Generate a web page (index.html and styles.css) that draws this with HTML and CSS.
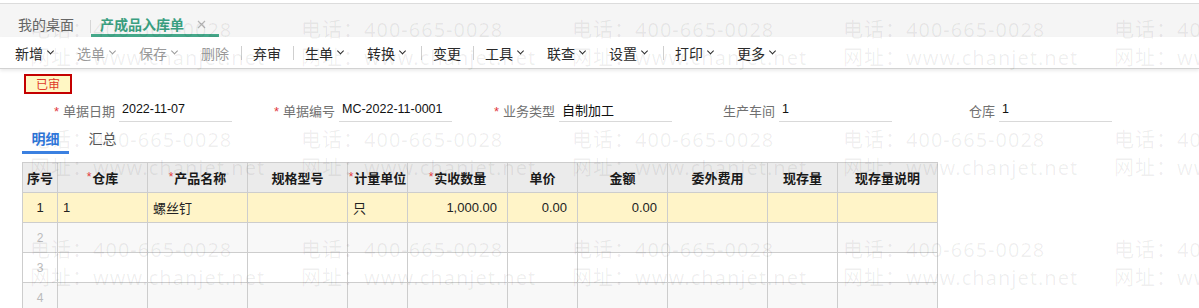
FILE: index.html
```html
<!DOCTYPE html>
<html lang="zh-CN">
<head>
  <meta charset="UTF-8" />
  <title>产成品入库单</title>
  <link rel="stylesheet" href="styles.css">
</head>
<body>
  <div class="page">
    <div class="tabbar">
      <div class="tab first">我的桌面</div>
      <span class="tab-sep"></span>
      <div class="tab active">产成品入库单
        <svg class="close" width="9" height="9" viewBox="0 0 9 9"><path d="M1 1L8 8M8 1L1 8" stroke="#b5b5b5" stroke-width="1.2" fill="none"/></svg>
      </div>
    </div>

    <div class="toolbar">
      <span class="tb drop">新增</span>
      <span class="tb drop off">选单</span>
      <span class="tb drop off">保存</span>
      <span class="tb off">删除</span>
      <span class="tb-sep"></span>
      <span class="tb">弃审</span>
      <span class="tb-sep"></span>
      <span class="tb drop">生单</span>
      <span class="tb drop">转换</span>
      <span class="tb-sep"></span>
      <span class="tb">变更</span>
      <span class="tb-sep"></span>
      <span class="tb drop">工具</span>
      <span class="tb drop">联查</span>
      <span class="tb drop">设置</span>
      <span class="tb-sep"></span>
      <span class="tb drop">打印</span>
      <span class="tb drop">更多</span>
    </div>

    <div class="content">
      <div class="status">已审</div>

      <div class="form-row">
        <div class="field"><label><i>*</i>单据日期</label><div class="value">2022-11-07</div></div>
        <div class="field"><label><i>*</i>单据编号</label><div class="value">MC-2022-11-0001</div></div>
        <div class="field"><label><i>*</i>业务类型</label><div class="value cn">自制加工</div></div>
        <div class="field"><label>生产车间</label><div class="value">1</div></div>
        <div class="field"><label>仓库</label><div class="value">1</div></div>
      </div>

      <div class="subtabs">
        <span class="subtab active">明细</span>
        <span class="subtab">汇总</span>
      </div>

      <table class="grid">
        <colgroup>
          <col style="width:35px"><col style="width:90px"><col style="width:100px"><col style="width:100px">
          <col style="width:60px"><col style="width:100px"><col style="width:70px"><col style="width:90px">
          <col style="width:100px"><col style="width:70px"><col style="width:100px">
        </colgroup>
        <tr>
          <th>序号</th>
          <th><i>*</i>仓库</th>
          <th><i>*</i>产品名称</th>
          <th>规格型号</th>
          <th><i>*</i>计量单位</th>
          <th><i>*</i>实收数量</th>
          <th>单价</th>
          <th>金额</th>
          <th>委外费用</th>
          <th>现存量</th>
          <th>现存量说明</th>
        </tr>
        <tr class="current">
          <td class="seq">1</td>
          <td>1</td>
          <td class="cn">螺丝钉</td>
          <td></td>
          <td class="cn">只</td>
          <td class="num">1,000.00</td>
          <td class="num">0.00</td>
          <td class="num">0.00</td>
          <td></td>
          <td></td>
          <td></td>
        </tr>
        <tr class="stripe">
          <td class="seq empty">2</td><td></td><td></td><td></td><td></td><td></td><td></td><td></td><td></td><td></td><td></td>
        </tr>
        <tr>
          <td class="seq empty">3</td><td></td><td></td><td></td><td></td><td></td><td></td><td></td><td></td><td></td><td></td>
        </tr>
        <tr class="stripe">
          <td class="seq empty">4</td><td></td><td></td><td></td><td></td><td></td><td></td><td></td><td></td><td></td><td></td>
        </tr>
        <tr>
          <td class="seq empty">5</td><td></td><td></td><td></td><td></td><td></td><td></td><td></td><td></td><td></td><td></td>
        </tr>
      </table>
    </div>

    <!-- Wasserzeichen über der Seite -->
    <div class="watermark">
      <div class="wm"><div>电话：400-665-0028</div><div>网址：www.chanjet.net</div></div>
      <div class="wm"><div>电话：400-665-0028</div><div>网址：www.chanjet.net</div></div>
      <div class="wm"><div>电话：400-665-0028</div><div>网址：www.chanjet.net</div></div>
      <div class="wm"><div>电话：400-665-0028</div><div>网址：www.chanjet.net</div></div>
      <div class="wm"><div>电话：400-665-0028</div><div>网址：www.chanjet.net</div></div>
      <div class="wm"><div>电话：400-665-0028</div><div>网址：www.chanjet.net</div></div>
      <div class="wm"><div>电话：400-665-0028</div><div>网址：www.chanjet.net</div></div>
      <div class="wm"><div>电话：400-665-0028</div><div>网址：www.chanjet.net</div></div>
      <div class="wm"><div>电话：400-665-0028</div><div>网址：www.chanjet.net</div></div>
      <div class="wm"><div>电话：400-665-0028</div><div>网址：www.chanjet.net</div></div>
      <div class="wm"><div>电话：400-665-0028</div><div>网址：www.chanjet.net</div></div>
      <div class="wm"><div>电话：400-665-0028</div><div>网址：www.chanjet.net</div></div>
      <div class="wm"><div>电话：400-665-0028</div><div>网址：www.chanjet.net</div></div>
      <div class="wm"><div>电话：400-665-0028</div><div>网址：www.chanjet.net</div></div>
      <div class="wm"><div>电话：400-665-0028</div><div>网址：www.chanjet.net</div></div>
    </div>
  </div>
</body>
</html>
```

FILE: styles.css
```css
body {
  margin: 0;
  font-family: "Liberation Sans", "Noto Sans CJK SC", sans-serif;
  font-size: 13px;
  color: #333;
  background: #fff;
  overflow: hidden;
}
.page {
  position: relative;
  height: 308px;
  overflow: hidden;
}

/* Reiter oben */
.tabbar {
  margin-top: 3px;
  border-top: 1px solid #dcdcdc;
  height: 33px;
  background: #f5f5f5;
  display: flex;
  align-items: stretch;
  font-family: "Noto Sans CJK SC", sans-serif;
}
.tab {
  display: flex;
  align-items: center;
  box-sizing: border-box;
  padding-top: 7px;
  font-size: 14px;
  color: #666;
  line-height: 20px;
}
.tab.first {
  padding-left: 18px;
  padding-right: 16px;
}
.tab-sep {
  align-self: flex-end;
  width: 1px;
  height: 13px;
  margin-bottom: 4px;
  background: #d6d6d6;
}
.tab.active {
  padding: 10px 13px 0 9px;
  border-bottom: 3px solid #45a88a;
  color: #3a9f80;
  font-weight: bold;
}
.tab .close {
  margin-left: 13px;
}

/* Werkzeugleiste */
.toolbar {
  position: relative;
  z-index: 2;
  height: 31px;
  border-bottom: 1px solid #d2d2d2;
  box-shadow: 0 2px 3px rgba(0, 0, 0, 0.08);
  background: #fff;
  display: flex;
  align-items: center;
  padding-left: 3.5px;
  font-family: "Noto Sans CJK SC", sans-serif;
}
.tb {
  display: flex;
  align-items: center;
  padding: 0 11.5px;
  font-size: 14px;
  color: #2a2a2a;
  white-space: nowrap;
}
.tb.off { color: #9a9a9a; }
.tb.drop::after {
  content: "";
  width: 4px;
  height: 4px;
  border: solid currentColor;
  border-width: 0 1.5px 1.5px 0;
  transform: translateY(-1.5px) rotate(45deg);
  margin-left: 4.5px;
  margin-right: 1.5px;
}
.tb-sep {
  width: 1px;
  height: 14px;
  background: #cfcfcf;
}
.tb.drop + .tb-sep {
  margin-left: 3px;
}

/* Inhalt */
.status {
  margin: 5px 0 0 24px;
  width: 44px;
  height: 16px;
  border: 2px solid #c40000;
  background: #fff7c4;
  color: #e03a2a;
  font-family: "Noto Sans CJK SC", sans-serif;
  font-size: 12px;
  line-height: 16px;
  text-align: center;
}
.form-row {
  display: flex;
  margin-top: 4px;
  padding-left: 12px;
}
.field {
  display: flex;
  align-items: center;
  flex: none;
  width: 220px;
}
.field label {
  width: 103px;
  margin-right: 4px;
  text-align: right;
  color: #707070;
  font-family: "Noto Sans CJK SC", sans-serif;
  font-size: 13px;
}
.field label i,
.grid th i {
  font-style: normal;
  color: #e2383c;
  font-family: "Liberation Sans", sans-serif;
}
.field label i {
  margin-right: 4px;
}
.value {
  box-sizing: border-box;
  width: 113px;
  height: 24px;
  line-height: 23px;
  padding-left: 3px;
  border-bottom: 1px solid #d9d9d9;
  font-size: 12.5px;
  color: #111;
}
.value.cn {
  font-family: "Noto Sans CJK SC", sans-serif;
  font-size: 13px;
}

.subtabs {
  display: flex;
  gap: 10px;
  margin-top: 6px;
  padding-left: 22px;
  font-family: "Noto Sans CJK SC", sans-serif;
}
.subtab {
  width: 47px;
  height: 20px;
  line-height: 20px;
  padding-bottom: 3px;
  text-align: center;
  font-size: 14px;
  color: #555;
  border-bottom: 3px solid transparent;
}
.subtab.active {
  color: #2f78dc;
  font-weight: bold;
  border-bottom-color: #3b80e0;
}

/* Tabelle */
.grid {
  margin: 8px 0 0 22px;
  border-collapse: collapse;
  table-layout: fixed;
  width: 916px;
}
.grid th,
.grid td {
  height: 29px;
  padding: 0 5px;
  border: 1px solid #cdcdcd;
  font-size: 13px;
  white-space: nowrap;
  overflow: hidden;
}
.grid th {
  padding: 0;
  overflow: visible;
  background: #ebebeb;
  color: #1a1a1a;
  font-family: "Noto Sans CJK SC", sans-serif;
  font-weight: bold;
  text-align: center;
}
.grid th i {
  font-weight: normal;
  font-size: 12px;
  position: relative;
  top: -2px;
  margin-right: 1px;
}
.grid td { color: #222; }
.grid td.cn { font-family: "Noto Sans CJK SC", sans-serif; }
.grid td.num {
  text-align: right;
  padding-right: 10px;
}
.grid td.seq {
  text-align: center;
  padding: 0;
}
.grid td.empty {
  color: #bbb;
  font-size: 12px;
}
.grid tr.current td { background: #fff4c8; }
.grid tr.stripe td { background: #f8f8f8; }

/* Wasserzeichen */
.watermark {
  position: absolute;
  left: 30px;
  top: 16px;
  width: 1400px;
  display: flex;
  flex-wrap: wrap;
  pointer-events: none;
  z-index: 5;
}
.wm {
  width: 271px;
  height: 110px;
  font-family: "Noto Sans", "Noto Sans CJK SC", sans-serif;
  font-size: 20px;
  letter-spacing: 1px;
  line-height: 28px;
  color: rgba(0, 0, 0, 0.065);
  white-space: nowrap;
}
```
